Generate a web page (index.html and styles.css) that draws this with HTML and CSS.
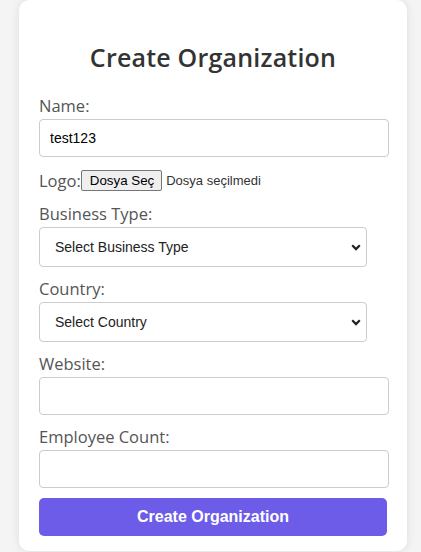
FILE: index.html
```html
<!DOCTYPE html>
<html lang="tr">
<head>
<meta charset="utf-8">
<title>Create Organization</title>
<link rel="stylesheet" href="styles.css">
</head>
<body>
<div class="card">
  <h2 class="title">Create Organization</h2>
  <form class="form">
    <div class="group">
      <label class="label" for="name">Name:</label>
      <input class="input" id="name" type="text" value="test123">
    </div>
    <div class="group logo-row">
      <label class="label inline">Logo:</label>
      <span class="file-btn">Dosya Seç</span>
      <span class="file-text">Dosya seçilmedi</span>
    </div>
    <div class="group">
      <label class="label" for="btype">Business Type:</label>
      <div class="select-wrap">
        <select class="select" id="btype"><option>Select Business Type</option></select>
        <svg class="chevron" width="10" height="7" viewBox="0 0 10 7"><path d="M1.2 1.3 L5 5.1 L8.8 1.3" fill="none" stroke="#222" stroke-width="2.2"/></svg>
      </div>
    </div>
    <div class="group">
      <label class="label" for="country">Country:</label>
      <div class="select-wrap">
        <select class="select" id="country"><option>Select Country</option></select>
        <svg class="chevron" width="10" height="7" viewBox="0 0 10 7"><path d="M1.2 1.3 L5 5.1 L8.8 1.3" fill="none" stroke="#222" stroke-width="2.2"/></svg>
      </div>
    </div>
    <div class="group">
      <label class="label" for="web">Website:</label>
      <input class="input" id="web" type="text">
    </div>
    <div class="group last">
      <label class="label" for="emp">Employee Count:</label>
      <input class="input" id="emp" type="text">
    </div>
    <button class="submit" type="button">Create Organization</button>
  </form>
</div>
</body>
</html>
```
FILE: styles.css
```css
html, body {
  margin: 0;
  padding: 0;
  background: #f4f4f4;
  height: 552px;
  overflow: hidden;
}
body {
  display: flex;
  align-items: flex-start;
  padding-left: 19px;
}
.card {
  width: 348px;
  background: #fff;
  border-radius: 10px;
  box-shadow: 0 0 10px rgba(0, 0, 0, 0.1);
  padding: 39px 20px 15px;
  box-sizing: content-box;
}
.title {
  margin: 0 0 21px;
  font-family: "Open Sans", sans-serif;
  font-weight: 600;
  font-size: 25px;
  line-height: 36px;
  text-align: center;
  color: #333;
  letter-spacing: 0.2px;
}
.form {
  display: flex;
  flex-direction: column;
  margin: 0;
}
.group {
  width: 328px;
  margin-bottom: 12px;
}
.group.last {
  margin-bottom: 10px;
}
.label {
  display: block;
  font-family: "Open Sans", sans-serif;
  font-size: 16.5px;
  line-height: 20px;
  color: #555;
  margin-bottom: 3px;
}
.label.inline {
  display: inline;
  margin: 0;
}
.input {
  display: block;
  width: 100%;
  box-sizing: content-box;
  padding: 10px;
  height: 16px;
  margin: 0;
  border: 1px solid #ccc;
  border-radius: 4px;
  font-family: "Liberation Sans", Arial, sans-serif;
  font-size: 14px;
  color: #000;
  background: #fff;
  outline: none;
}
.logo-row {
  display: flex;
  align-items: center;
  height: 23px;
}
.file-btn {
  display: inline-block;
  box-sizing: border-box;
  height: 21px;
  padding: 0 7px 0 8px;
  line-height: 19px;
  border: 1px solid #767676;
  border-radius: 2px;
  background: #efefef;
  font-family: "Liberation Sans", Arial, sans-serif;
  font-size: 13.333px;
  color: #000;
}
.file-text {
  margin-left: 4px;
  font-family: "Liberation Sans", Arial, sans-serif;
  font-size: 13px;
  color: #333;
}
.select-wrap {
  position: relative;
}
.select {
  display: block;
  width: 100%;
  box-sizing: border-box;
  height: 40px;
  margin: 0;
  padding: 0 30px 0 15px;
  border: 1px solid #ccc;
  border-radius: 4px;
  background: #fff;
  appearance: none;
  -webkit-appearance: none;
  font-family: "Liberation Sans", Arial, sans-serif;
  font-size: 14px;
  color: #222;
  outline: none;
}
.chevron {
  position: absolute;
  right: 6px;
  top: 17px;
  pointer-events: none;
}
.submit {
  width: 348px;
  height: 38px;
  margin: 0;
  border: none;
  border-radius: 5px;
  background: #6c5ce7;
  color: #fff;
  font-family: "Liberation Sans", Arial, sans-serif;
  font-weight: bold;
  font-size: 16px;
  cursor: pointer;
}
```
